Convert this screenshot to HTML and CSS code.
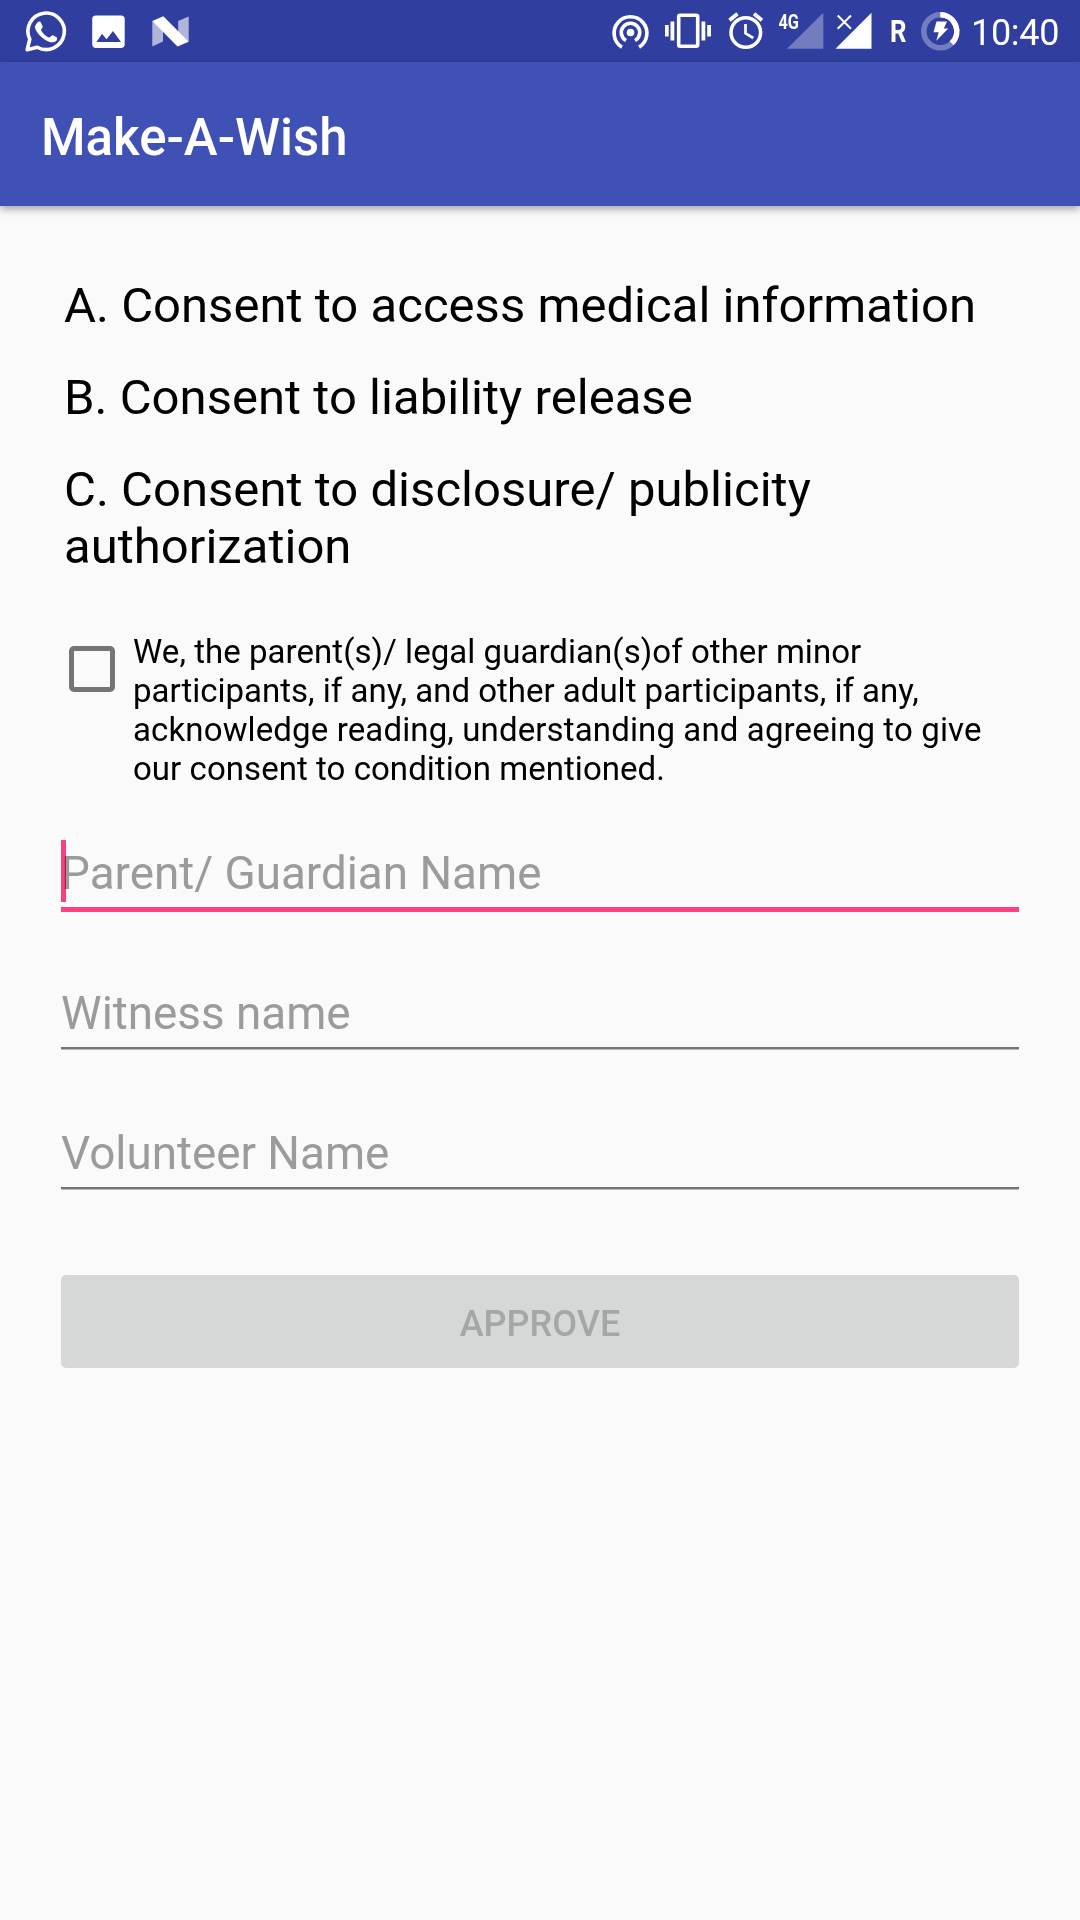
FILE: index.html
```html
<!DOCTYPE html>
<html lang="en">
<head>
<meta charset="utf-8">
<title>Make-A-Wish</title>
<link rel="stylesheet" href="styles.css">
</head>
<body>
<header class="status-bar">
  <div class="status-group">
    <svg class="icon-whatsapp" width="42" height="42" viewBox="0 0 42 42">
      <path d="M2.2 39.8 L4.8 29.3 A18.2 18.2 0 1 1 12.3 37.2 Z" fill="none" stroke="#fff" stroke-width="3.6" stroke-linejoin="round"/>
      <path d="M13.3 12 C14.300 11.200 15.500 11.600 16.100 12.900 L17.700 16.500 C18.200 17.700 15.500 19.300 16 20.300 C17.700 23.500 20.500 26 23.800 27.500 C25 28 26.600 24.700 27.800 25.200 L31.700 27.200 C32.700 27.800 32 30.100 31.100 31 C28.500 33.300 24.500 32.300 20.400 30 C15.500 27.200 11.800 22.800 10.200 18.600 C9.500 16.300 11.200 13.200 13.300 12 Z" fill="#fff"/>
    </svg>
    <svg class="icon-image" width="34" height="34" viewBox="0 0 34 34">
      <path fill="#fff" fill-rule="evenodd" d="M4 0.500H29Q32.700 .5 32.700 4V29Q32.700 33 29 33H4Q.2 33 .2 29V4Q.2 .5 4 .5Z M4.500 27H29L21 16L14.500 24.300L10 18.800Z"/>
    </svg>
    <svg class="icon-nougat" width="38" height="32" viewBox="0 0 38 32">
      <path fill="#fff" fill-opacity=".62" d="M.3 5V30.500L11 25.500V14Z M26.200 5L36.700 .6V26L26.200 18Z"/>
      <path fill="#fff" d="M.3 5L11.300 .3L36.700 25.700L25.500 30.600Z"/>
    </svg>
  </div>
  <div class="status-group">
    <svg class="icon-hotspot" width="38" height="36" viewBox="0 0 38 36">
      <circle cx="18.500" cy="18.500" r="3.800" fill="#fff"/>
      <g fill="none" stroke="#fff" stroke-width="3.600">
        <path d="M14 26.500A9.200 9.200 0 1 1 23 26.500"/>
        <path d="M9.900 33.100A16.400 16.400 0 1 1 27.100 33.100"/>
      </g>
    </svg>
    <svg class="icon-vibrate" width="46" height="36" viewBox="0 0 46 36">
      <rect x="13.700" y="2.200" width="19" height="31" rx="1.500" fill="none" stroke="#fff" stroke-width="3.600"/>
      <path fill="#fff" d="M0 12H3.700V23.500H0Z M5.500 8.500H9.300V27.500H5.500Z M36.500 8.500H40.300V27.500H36.500Z M42.200 12H46V23.500H42.200Z"/>
    </svg>
    <svg class="icon-alarm" width="36" height="38" viewBox="0 0 36 38">
      <g fill="none" stroke="#fff">
        <circle cx="17.800" cy="20.500" r="14.800" stroke-width="3.500"/>
        <path stroke-width="3.800" d="M1.500 8.300L9.500 1.700M26 1.700L34 8.300"/>
        <path stroke-width="2.700" d="M17.500 12V21.300L25.300 26"/>
      </g>
    </svg>
    <svg class="icon-signal-4g" width="46" height="38" viewBox="0 0 46 38">
      <path fill="#fff" fill-opacity=".32" d="M45.300 .7V36.700H9Z"/>
      <text class="network-type" x=".5" y="16.600" textLength="20.500" lengthAdjust="spacingAndGlyphs">4G</text>
    </svg>
    <svg class="icon-signal" width="37" height="38" viewBox="0 0 37 38">
      <path fill="#fff" d="M36.500 .7V36.700H.5Z"/>
      <path fill="none" stroke="#fff" stroke-width="2" d="M2.700 3.500L16 16.800M16 3.500L2.700 16.800"/>
    </svg>
    <svg class="icon-roaming" width="17" height="38" viewBox="0 0 17 38">
      <text class="roaming" x="0" y="30" textLength="16.500" lengthAdjust="spacingAndGlyphs">R</text>
    </svg>
    <svg class="icon-battery" width="39" height="39" viewBox="0 0 39 39">
      <circle cx="19.300" cy="19.300" r="16.500" fill="none" stroke="#fff" stroke-opacity=".32" stroke-width="5.500"/>
      <path d="M19.300 2.800A16.500 16.500 0 0 1 30.600 31.300" fill="none" stroke="#fff" stroke-width="5.500"/>
      <path fill="#fff" d="M15.500 9.500H26L22.800 16.500H27.300L15.300 28.800L17.700 20.300H12.500Z"/>
    </svg>
    <span class="clock">10:40</span>
  </div>
</header>
<div class="app-bar"><h1 class="app-title">Make-A-Wish</h1></div>
<main class="content">
  <div class="consents">
    <p class="consent">A. Consent to access medical information</p>
    <p class="consent">B. Consent to liability release</p>
    <p class="consent">C. Consent to disclosure/ publicity<br>authorization</p>
  </div>
  <label class="agreement">
    <input class="agreement-box" type="checkbox">
    <span class="agreement-text">
      <span class="line line-1">We, the parent(s)/ legal guardian(s)of other minor</span>
      <span class="line line-2">participants, if any, and other adult participants, if any,</span>
      <span class="line line-3">acknowledge reading, understanding and agreeing to give</span>
      <span class="line line-4">our consent to condition mentioned.</span>
    </span>
  </label>
  <div class="field field-focused"><span class="hint">Parent/ Guardian Name</span><span class="caret"></span></div>
  <div class="field field-witness"><span class="hint">Witness name</span></div>
  <div class="field"><span class="hint">Volunteer Name</span></div>
  <button class="approve" disabled>APPROVE</button>
</main>
</body>
</html>
```
FILE: styles.css
```css
* { box-sizing: border-box; margin: 0; padding: 0; }

body {
  min-height: 1920px;
  background: #fafafa;
  color: #000;
  font-family: Roboto, sans-serif;
}

.status-bar {
  display: flex;
  justify-content: space-between;
  height: 62px;
  padding: 0 22px 0 25px;
  background: #303f9f;
  color: #fff;
}

.status-group { display: flex; align-items: flex-start; }
.status-group svg { flex: none; overflow: visible; }

.icon-whatsapp { margin-top: 10px; }
.icon-image { margin: 15px 0 0 25px; }
.icon-nougat { margin: 16px 0 0 26px; }
.icon-hotspot { margin-top: 14px; }
.icon-vibrate { margin: 13px 0 0 15px; }
.icon-alarm { margin: 12px 0 0 17px; }
.icon-signal-4g { margin: 12px 0 0 14px; }
.icon-signal { margin: 12px 0 0 11px; }
.icon-roaming { margin: 12px 0 0 18px; }
.icon-battery { margin: 12px 0 0 14px; }

.network-type { fill: #fff; font-size: 21px; font-weight: 700; }
.roaming { fill: #fff; font-size: 31px; font-weight: 700; }

.clock {
  width: 87px;
  margin-left: 11px;
  font-size: 36px;
  letter-spacing: -.3px;
  line-height: 66px;
}

.app-bar {
  position: relative;
  display: flex;
  align-items: center;
  height: 144px;
  padding: 8px 41px 0;
  background: #3f51b5;
  box-shadow: 0 3px 8px rgba(0, 0, 0, .36);
}

.app-title {
  color: #fff;
  font-size: 51px;
  font-weight: 500;
  line-height: 60px;
}

.content {
  display: flex;
  flex-direction: column;
  padding: 71px 61px 0;
}

.consents {
  display: flex;
  flex-direction: column;
  gap: 35px;
  padding-left: 3px;
}

.consent {
  font-size: 49px;
  letter-spacing: .03px;
  line-height: 57px;
  white-space: nowrap;
}

.agreement {
  display: flex;
  gap: 18px;
  margin-top: 57px;
  padding-left: 8px;
}

.agreement-box {
  appearance: none;
  flex: none;
  width: 46px;
  height: 46px;
  margin-top: 14px;
  border: 5px solid #757575;
  border-radius: 5px;
}

.agreement-text {
  font-size: 33px;
  line-height: 39px;
  white-space: nowrap;
}

.line { display: block; }
.line-1 { letter-spacing: .05px; }
.line-3 { letter-spacing: .13px; }
.line-4 { letter-spacing: .05px; }

.field {
  position: relative;
  display: flex;
  align-items: flex-end;
  height: 140px;
  padding-bottom: 7px;
  border-bottom: 1px solid #b9b9b9;
  box-shadow: inset 0 -2px #757575;
}

.field-witness { height: 138px; }

.field-focused {
  height: 124px;
  padding-bottom: 5px;
  border-bottom: 5px solid #ff4081;
  box-shadow: none;
}

.hint {
  color: #9b9b9b;
  font-size: 45.8px;
  line-height: 56px;
  white-space: nowrap;
}

.caret {
  position: absolute;
  left: 0;
  bottom: 5px;
  width: 5px;
  height: 62px;
  background: #ff4081;
  mix-blend-mode: multiply;
}

.approve {
  height: 93px;
  margin-top: 85px;
  padding-top: 5px;
  border: 0;
  border-radius: 5px;
  background: #d6d8d7;
  color: #a5a7a6;
  font: 500 36px/42px Roboto, sans-serif;
}
```
